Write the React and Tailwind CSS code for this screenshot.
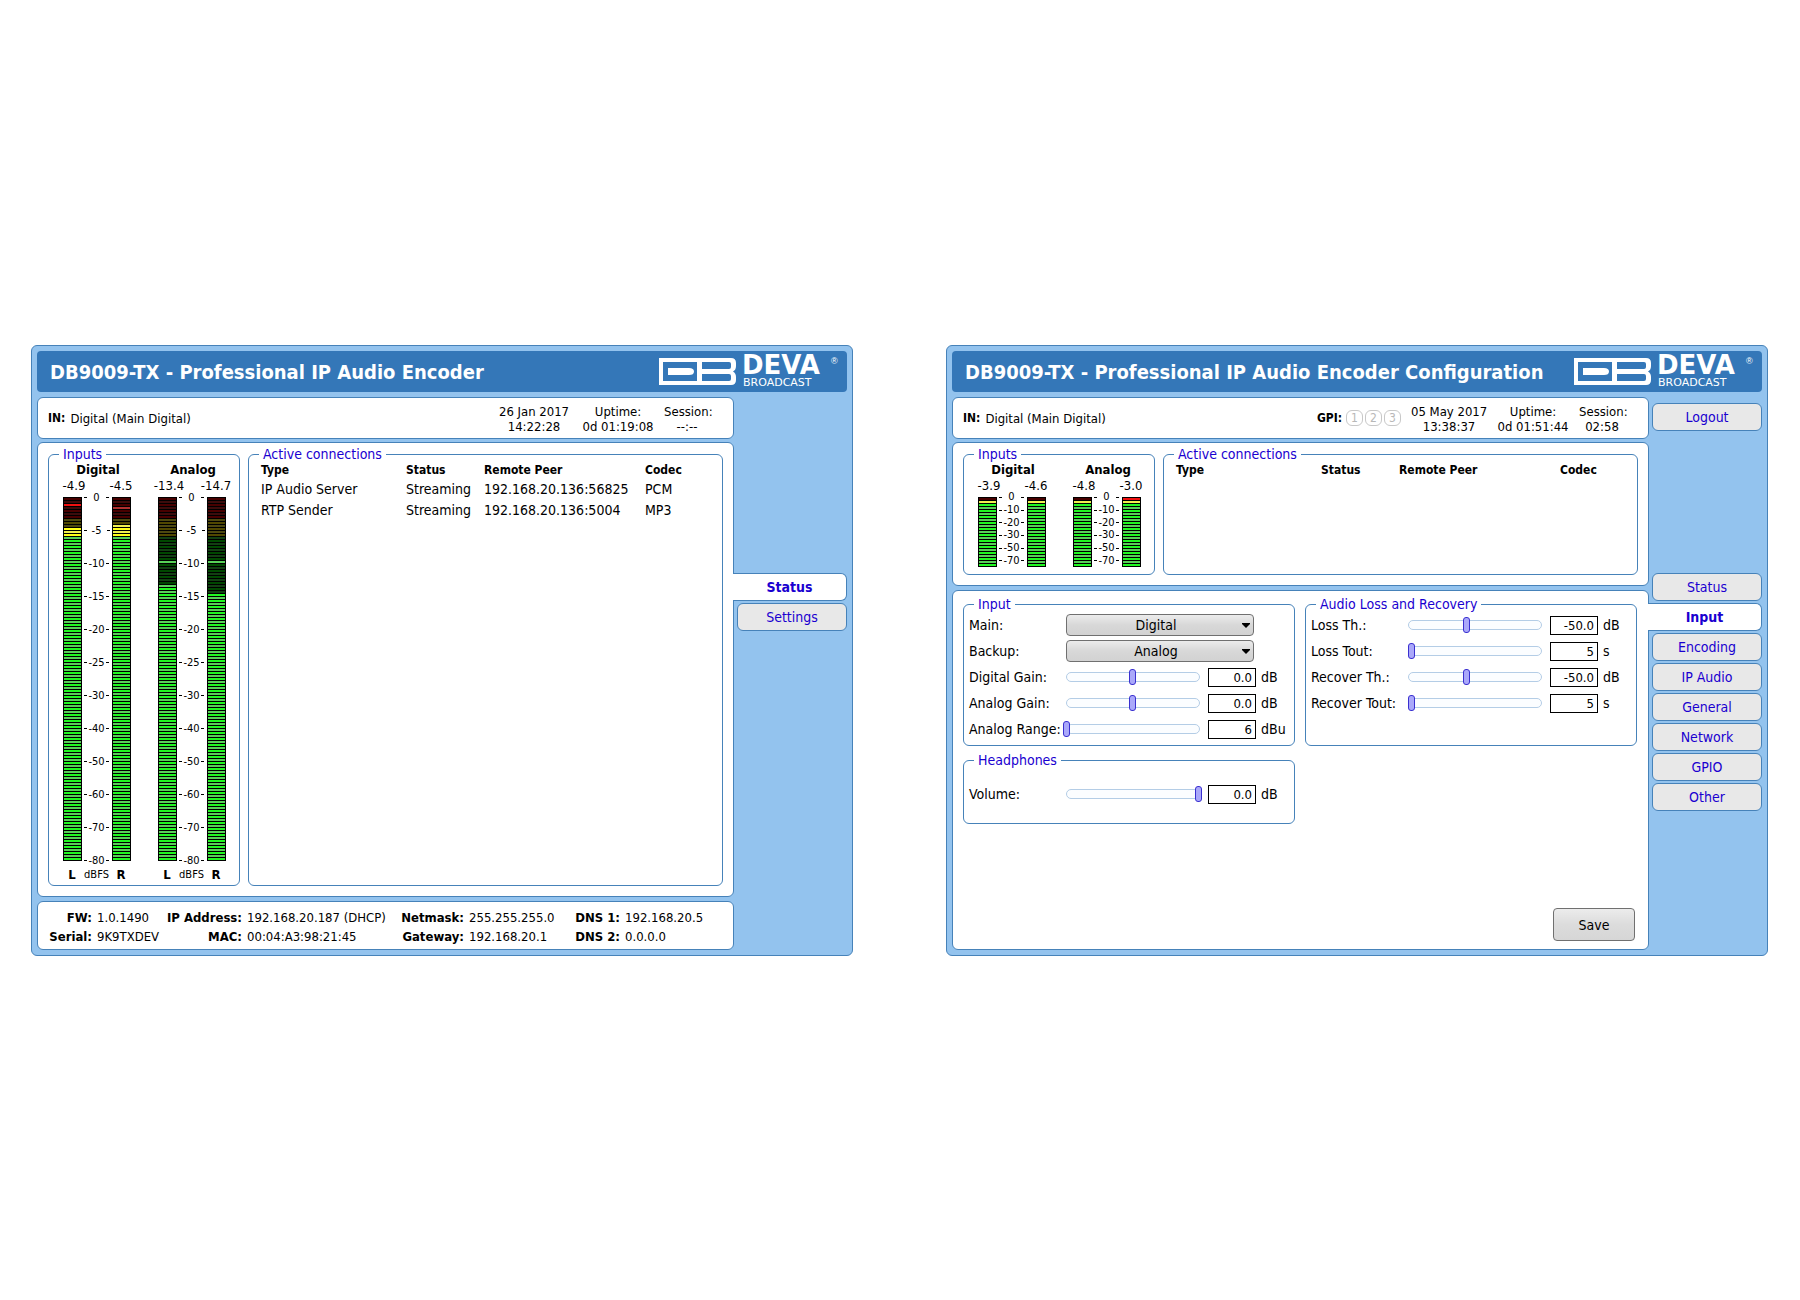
import { useState } from 'react'

const METER_RED = 7
const METER_YELLOW = 6

const LARGE_SCALE = ['0', '-5', '-10', '-15', '-20', '-25', '-30', '-40', '-50', '-60', '-70', '-80']
const SMALL_SCALE = ['0', '-10', '-20', '-30', '-50', '-70']

const LARGE_METERS = [
  { name: 'Digital', left: { value: '-4.9', from: 10, peak: 2 }, right: { value: '-4.5', from: 9, peak: 3 } },
  { name: 'Analog', left: { value: '-13.4', from: 29, peak: 21 }, right: { value: '-14.7', from: 32, peak: 21 } },
]

const SMALL_METERS = [
  { name: 'Digital', left: { value: '-3.9', from: 1 }, right: { value: '-4.6', from: 1 } },
  { name: 'Analog', left: { value: '-4.8', from: 1 }, right: { value: '-3.0', from: 0 } },
]

const CONNECTIONS = [
  { type: 'IP Audio Server', status: 'Streaming', peer: '192.168.20.136:56825', codec: 'PCM' },
  { type: 'RTP Sender', status: 'Streaming', peer: '192.168.20.136:5004', codec: 'MP3' },
]

const DEVICE_INFO = [
  ['FW:', '1.0.1490'],
  ['IP Address:', '192.168.20.187 (DHCP)'],
  ['Netmask:', '255.255.255.0'],
  ['DNS 1:', '192.168.20.5'],
  ['Serial:', '9K9TXDEV'],
  ['MAC:', '00:04:A3:98:21:45'],
  ['Gateway:', '192.168.20.1'],
  ['DNS 2:', '0.0.0.0'],
]

const INPUT_SLIDERS = [
  { id: 'digital-gain', label: 'Digital Gain:', pos: 50, value: '0.0', unit: 'dB' },
  { id: 'analog-gain', label: 'Analog Gain:', pos: 50, value: '0.0', unit: 'dB' },
  { id: 'analog-range', label: 'Analog Range:', pos: 0, value: '6', unit: 'dBu' },
]

const LOSS_SLIDERS = [
  { id: 'loss-th', label: 'Loss Th.:', pos: 44, value: '-50.0', unit: 'dB' },
  { id: 'loss-tout', label: 'Loss Tout:', pos: 2, value: '5', unit: 's' },
  { id: 'recover-th', label: 'Recover Th.:', pos: 44, value: '-50.0', unit: 'dB' },
  { id: 'recover-tout', label: 'Recover Tout:', pos: 2, value: '5', unit: 's' },
]

function Logo() {
  return (
    <svg width="181" height="41" viewBox="0 -7 181 41" className="shrink-0" role="img" aria-label="DB DEVA Broadcast">
      <path fill="#fff" d="M0 0h72q5 0 5 5v3q0 4-3 5.500q3 1.500 3 5.500v3q0 5-5 5H0z" />
      <path fill="#3477b8" d="M4 4h34v19H4z" />
      <path fill="#fff" d="M9 10h21q5 0 5 3.500t-5 3.500H9z" />
      <path fill="#3477b8" d="M43 4h27q2 0 2 2v3q0 2-2 2H43zM43 16h27q2 0 2 2v3q0 2-2 2H43z" />
      <text x="83" y="16" fill="#fff" fontSize="26" fontWeight="700" fontFamily="DejaVu Sans">DEVA</text>
      <text x="84" y="28" fill="#fff" fontSize="11" fontFamily="DejaVu Sans">BROADCAST</text>
      <text x="172" y="6" fill="#fff" fontSize="9" fontFamily="Liberation Sans">®</text>
    </svg>
  )
}

function Window({ title, sidebar, children }) {
  return (
    <section className="flex flex-col gap-[5px] p-[5px] min-w-0 rounded-md border border-[#4682b9] bg-[#93c3ee]">
      <header className="flex items-center justify-between h-[41px] pl-[13px] pr-[7px] rounded bg-[#3477b8]">
        <h1 className="text-[20px] leading-6 font-bold text-white whitespace-nowrap">{title}</h1>
        <Logo />
      </header>
      <div className="flex grow">
        <main className="flex flex-col grow min-w-0">{children}</main>
        <nav className="flex flex-col gap-[2px] w-[113px] shrink-0">{sidebar}</nav>
      </div>
    </section>
  )
}

function Tab({ active, children }) {
  return (
    <button
      className={`h-[28px] border border-[#4682b9] text-[14px] leading-4 text-[#1a00d0] ${
        active
          ? 'relative -ml-px border-l-0 rounded-r-md bg-white font-bold'
          : 'ml-[3px] rounded-md bg-[#e8e8e8]'
      }`}
    >
      {children}
    </button>
  )
}

function Panel({ className, children }) {
  return <div className={`rounded-md border border-[#4682b9] bg-white ${className}`}>{children}</div>
}

function Group({ title, className, children }) {
  return (
    <fieldset className={`min-w-0 rounded-md border border-[#4682b9] ${className}`}>
      <legend className="ml-[10px] px-1 text-[14px] leading-4 text-[#1a00d0]">{title}</legend>
      {children}
    </fieldset>
  )
}

function StatusField({ label, value, className }) {
  return (
    <div className={`pt-[2px] text-center whitespace-nowrap ${className}`}>
      {label}
      <br />
      {value}
    </div>
  )
}

function StatusBar({ gpi, date, time, uptime, session }) {
  return (
    <Panel className="flex items-center h-[42px] px-[10px] mb-[3px] text-[13px] leading-[15px]">
      <b className="mr-[5px] text-[12px]">IN:</b>
      <span className="grow">Digital (Main Digital)</span>
      {gpi && (
        <div className="flex items-center gap-[2px] mr-[10px]">
          <b className="mr-[2px] text-[12px]">GPI:</b>
          {[1, 2, 3].map(n => (
            <span key={n} className="w-[17px] h-4 rounded-md border border-[#c8c8c8] text-[12px] leading-[14px] text-center text-[#b8b8b8]">
              {n}
            </span>
          ))}
        </div>
      )}
      <StatusField label={date} value={time} className="w-[76px]" />
      <StatusField label="Uptime:" value={uptime} className="w-[92px]" />
      <StatusField label="Session:" value={session} className="w-[46px] mr-[13px]" />
    </Panel>
  )
}

function cellColor(i, lit, red, yellow) {
  const odd = i % 2 === 1
  if (i < red) {
    if (lit) return odd ? 'bg-[#b03030]' : 'bg-[#f01010]'
    return odd ? 'bg-[#3c0c0c]' : 'bg-[#480000]'
  }
  if (i < red + yellow) {
    if (lit) return odd ? 'bg-[#f0f050]' : 'bg-[#ffff18]'
    return odd ? 'bg-[#4c4810]' : 'bg-[#504800]'
  }
  if (lit) return odd ? 'bg-[#58d058]' : 'bg-[#20f820]'
  return odd ? 'bg-[#124012]' : 'bg-[#004800]'
}

function Bar({ from, peak, cells, red, yellow }) {
  return (
    <div className="flex flex-col gap-px w-[19px] p-px bg-black">
      {Array.from({ length: cells }, (_, i) => (
        <div key={i} className={`h-[2px] ${cellColor(i, i >= from || i === peak, red, yellow)}`} />
      ))}
    </div>
  )
}

function Scale({ labels, className, rowClass }) {
  return (
    <div className={`flex flex-col justify-between w-[30px] px-[2px] text-[11px] leading-3 ${className}`}>
      {labels.map(label => (
        <div key={label} className={`flex items-center justify-between ${rowClass}`}>
          <span className="w-[3px] h-px bg-black" />
          {label}
          <span className="w-[3px] h-px bg-black" />
        </div>
      ))}
    </div>
  )
}

function Meter({ name, left, right, large }) {
  const size = large
    ? { cells: 121, red: METER_RED, yellow: METER_YELLOW }
    : { cells: 23, red: 1, yellow: 1 }
  return (
    <div className="w-[95px]">
      <div className="pl-[3px] text-center text-[13px] leading-4 font-bold">{name}</div>
      <div className="flex justify-between pl-[2px] mb-[3px] leading-4 text-[13px]">
        <span className="w-[46px] text-center">{left.value}</span>
        <span className="w-[46px] text-center">{right.value}</span>
      </div>
      <div className="flex justify-center">
        <Bar {...left} {...size} />
        {large ? (
          <Scale labels={LARGE_SCALE} className="-my-4" rowClass="h-[33px]" />
        ) : (
          <Scale labels={SMALL_SCALE} className="h-[76px] -mt-[6px] -mb-4" rowClass="h-[13px]" />
        )}
        <Bar {...right} {...size} />
      </div>
      {large && (
        <div className="flex justify-center items-center mt-[6px] leading-4 text-center">
          <b className="w-[19px] text-[13px]">L</b>
          <span className="w-[30px] text-[11px]">dBFS</span>
          <b className="w-[19px] text-[13px]">R</b>
        </div>
      )}
    </div>
  )
}

function Overview({ large, connections }) {
  return (
    <Panel className={`flex gap-2 px-[10px] pt-[3px] pb-[10px] ${large ? 'h-[455px]' : 'h-[144px]'}`}>
      <Group title="Inputs" className="w-[192px] shrink-0">
        <div className="flex">
          {(large ? LARGE_METERS : SMALL_METERS).map(meter => (
            <Meter key={meter.name} {...meter} large={large} />
          ))}
        </div>
      </Group>
      <Group title="Active connections" className="grow">
        <table className="w-full table-fixed text-left text-[14px] leading-[21px]">
          <thead className="text-[12px] leading-4">
            <tr>
              <th className="w-[157px] pl-[12px]">Type</th>
              <th className="w-[78px]">Status</th>
              <th className="w-[161px]">Remote Peer</th>
              <th>Codec</th>
            </tr>
          </thead>
          <tbody className="before:block before:h-px">
            {connections.map(c => (
              <tr key={c.type}>
                <td className="pl-[12px]">{c.type}</td>
                <td>{c.status}</td>
                <td>{c.peer}</td>
                <td>{c.codec}</td>
              </tr>
            ))}
          </tbody>
        </table>
      </Group>
    </Panel>
  )
}

function SelectRow({ id, label, options }) {
  return (
    <div className="flex items-center h-[26px] pl-[5px]">
      <label htmlFor={id} className="w-[97px] shrink-0">{label}</label>
      <div className="relative w-[188px]">
        <select
          id={id}
          className="block w-full h-[22px] appearance-none rounded border border-[#707070] bg-linear-to-b from-[#ececec] via-[#d8d8d8] to-[#d2d2d2] pr-2 leading-4 [text-align-last:center]"
        >
          {options.map(o => <option key={o}>{o}</option>)}
        </select>
        <svg width="8" height="5" viewBox="0 0 8 5" className="absolute right-[4px] top-[9px] pointer-events-none">
          <path d="M0 0h8v1L4 5 0 1z" />
        </svg>
      </div>
    </div>
  )
}

function SliderRow({ id, label, pos, value, unit }) {
  const [level, setLevel] = useState(pos)
  return (
    <div className="flex items-center h-[26px] pl-[5px]">
      <label htmlFor={id} className="w-[97px] shrink-0 whitespace-nowrap">{label}</label>
      <div className="w-[134px] h-[10px] shrink-0 rounded-full border border-[#b4cde6] bg-[#fbfdff]">
        <input
          id={id}
          type="range"
          value={level}
          onChange={e => setLevel(Number(e.target.value))}
          className="block w-[139px] h-4 -mx-1 -my-1 appearance-none bg-transparent [&::-webkit-slider-thumb]:appearance-none [&::-webkit-slider-thumb]:w-[7px] [&::-webkit-slider-thumb]:h-4 [&::-webkit-slider-thumb]:rounded-[3px] [&::-webkit-slider-thumb]:border [&::-webkit-slider-thumb]:border-[#3a30d0] [&::-webkit-slider-thumb]:bg-[#aaa8fa]"
        />
      </div>
      <input
        type="text"
        aria-label={`${label} value`}
        defaultValue={value}
        className="w-[48px] h-[19px] ml-2 pr-[3px] border border-black bg-white text-right text-[13px]"
      />
      <span className="ml-[5px]">{unit}</span>
    </div>
  )
}

export default function App() {
  return (
    <div className="grid grid-cols-2 gap-[93px] pt-[345px] pl-[31px] pr-8 bg-white text-black font-['DejaVu_Sans_Condensed','Noto_Sans',sans-serif]">
      <Window
        title="DB9009-TX - Professional IP Audio Encoder"
        sidebar={
          <>
            <div className="h-[174px]" />
            <Tab active>Status</Tab>
            <Tab>Settings</Tab>
          </>
        }
      >
        <StatusBar date="26 Jan 2017" time="14:22:28" uptime="0d 01:19:08" session="--:--" />
        <Overview large connections={CONNECTIONS} />
        <Panel className="mt-1 h-[49px] pt-[6px] text-[13px] leading-[19px]">
          <dl className="grid grid-cols-[54px_54px_86px_135px_77px_70px_76px_1fr] gap-x-[5px] whitespace-nowrap">
            {DEVICE_INFO.map(([label, value]) => (
              <div key={label} className="contents">
                <dt className="flex justify-end font-bold">{label}</dt>
                <dd>{value}</dd>
              </div>
            ))}
          </dl>
        </Panel>
      </Window>

      <Window
        title="DB9009-TX - Professional IP Audio Encoder Configuration"
        sidebar={
          <>
            <div className="flex flex-col h-[174px] pt-[6px]">
              <Tab>Logout</Tab>
            </div>
            <Tab>Status</Tab>
            <Tab active>Input</Tab>
            <Tab>Encoding</Tab>
            <Tab>IP Audio</Tab>
            <Tab>General</Tab>
            <Tab>Network</Tab>
            <Tab>GPIO</Tab>
            <Tab>Other</Tab>
          </>
        }
      >
        <StatusBar gpi date="05 May 2017" time="13:38:37" uptime="0d 01:51:44" session="02:58" />
        <Overview connections={[]} />
        <Panel className="flex flex-col grow mt-1 pl-[10px] pr-[11px] pt-[5px] pb-[8px] text-[14px] leading-4">
          <div className="grid grid-cols-2 gap-x-[10px] gap-y-[6px]">
            <Group title="Input" className="h-[150px]">
              <SelectRow id="main" label="Main:" options={['Digital', 'Analog']} />
              <SelectRow id="backup" label="Backup:" options={['Analog', 'Digital']} />
              {INPUT_SLIDERS.map(s => <SliderRow key={s.id} {...s} />)}
            </Group>
            <Group title="Audio Loss and Recovery" className="h-[150px]">
              {LOSS_SLIDERS.map(s => <SliderRow key={s.id} {...s} />)}
            </Group>
            <Group title="Headphones" className="h-[72px]">
              <div className="pt-[13px]">
                <SliderRow id="volume" label="Volume:" pos={100} value="0.0" unit="dB" />
              </div>
            </Group>
          </div>
          <button className="self-end mt-auto mr-[2px] w-[82px] h-[33px] rounded border border-[#707070] bg-linear-to-b from-[#ececec] via-[#dcdcdc] to-[#d6d6d6]">
            Save
          </button>
        </Panel>
      </Window>
    </div>
  )
}
